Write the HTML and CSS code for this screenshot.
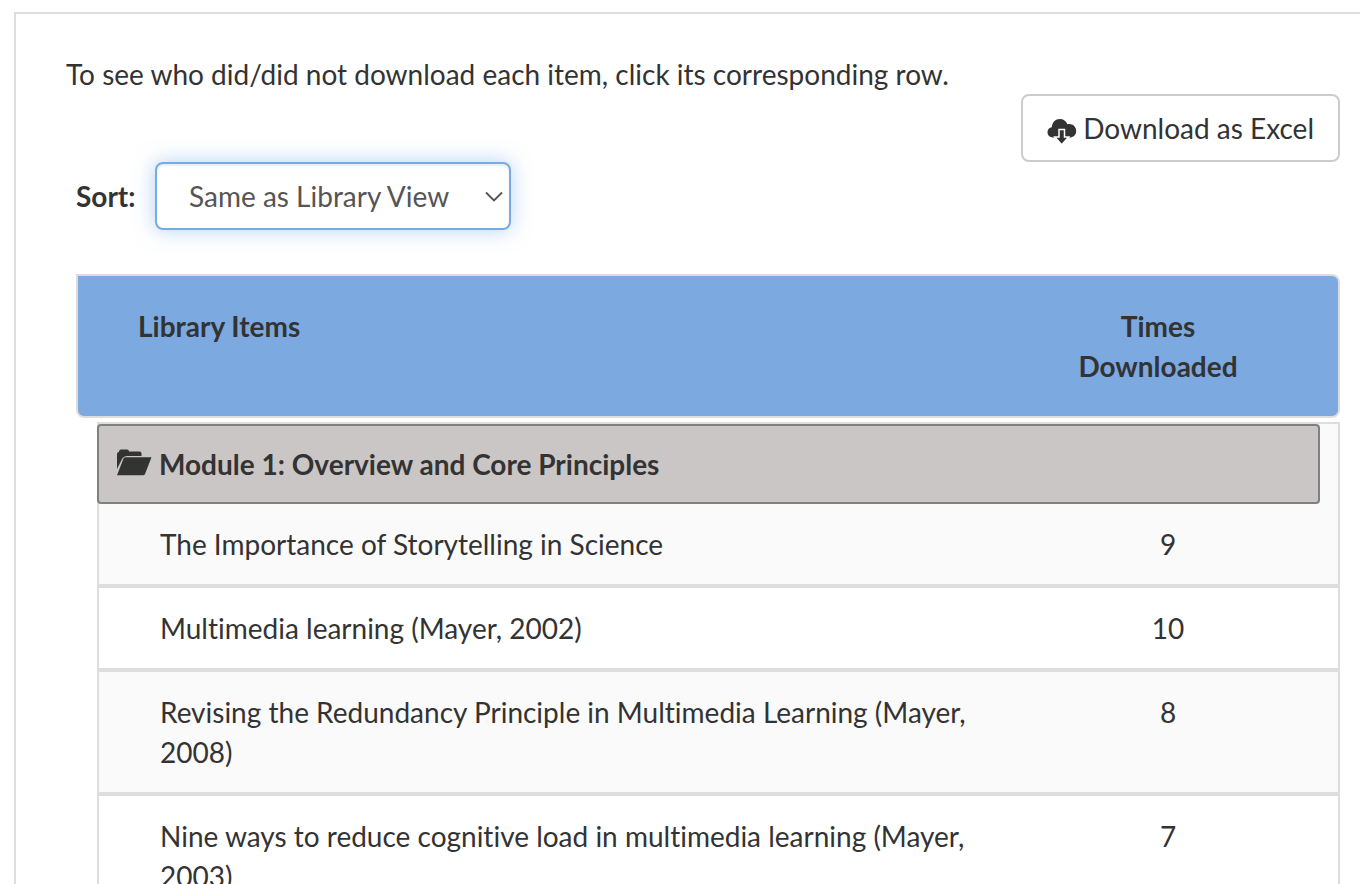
FILE: index.html
```html
<!DOCTYPE html>
<html lang="en">
<head>
<meta charset="utf-8">
<meta name="viewport" content="width=device-width, initial-scale=1">
<title>Library downloads</title>
<link rel="stylesheet" href="styles.css">
</head>
<body>
<main class="panel">
  <p class="intro">To see who did/did not download each item, click its corresponding row.</p>
  <div class="actions">
    <button class="download" type="button">
      <svg class="cloud" viewBox="0 0 30 27" aria-hidden="true">
        <path fill="currentColor" d="M6 19.500C2.800 19.500 .5 17.400 .5 14.300c0-2.700 1.900-4.700 4.300-5C5 4.300 8.500 1 12.900 1c3.600 0 6.300 2 7.400 5.300C25 5.100 29.200 8.200 29.200 13c0 3.900-2.900 6.500-6.700 6.500z"/>
        <path fill="currentColor" stroke="#fff" stroke-width="1.500" d="M12 11.500h5.500V19h4.200L14.700 26.800 7.800 19H12z"/>
      </svg>
      <span>Download as Excel</span>
    </button>
  </div>
  <div class="sort">
    <label class="sort-label" for="sort">Sort:</label>
    <div class="select-wrap">
      <select class="select" id="sort">
        <option>Same as Library View</option>
      </select>
      <svg class="chevron" viewBox="0 0 18 11" aria-hidden="true"><path d="M1 1.500l8 8 8-8" fill="none" stroke="currentColor" stroke-width="1.800"/></svg>
    </div>
  </div>
  <table class="library">
    <thead class="head">
      <tr class="head-row">
        <th class="head-name" scope="col">Library Items</th>
        <th class="head-count" scope="col">Times Downloaded</th>
      </tr>
    </thead>
    <tbody class="items">
      <tr class="module">
        <th class="module-name" colspan="2" scope="rowgroup">
          <svg class="folder" viewBox="0 0 36 27" aria-hidden="true">
            <path fill="currentColor" d="M1 20V5Q1 3 3 3V2.500Q3 .5 5 .5h6q2 0 2 2h10.500q2 0 2 2V7H11Q7.600 7 6.300 9.500z"/>
            <path fill="currentColor" d="M10 8.200h25.500L29 25q-.5 1.300-2 1.300H1L7.500 9.500q.6-1.300 2.500-1.300z"/>
          </svg>
          <span>Module 1: Overview and Core Principles</span>
        </th>
      </tr>
      <tr class="item"><td class="name">The Importance of Storytelling in Science</td><td class="count">9</td></tr>
      <tr class="item"><td class="name">Multimedia learning (Mayer, 2002)</td><td class="count">10</td></tr>
      <tr class="item"><td class="name">Revising the Redundancy Principle in Multimedia Learning (Mayer, 2008)</td><td class="count">8</td></tr>
      <tr class="item"><td class="name">Nine ways to reduce cognitive load in multimedia learning (Mayer, 2003)</td><td class="count">7</td></tr>
    </tbody>
  </table>
</main>
</body>
</html>
```

FILE: styles.css
```css
* { box-sizing: border-box; }
html { overflow-x: hidden; scrollbar-width: none; }
body {
  margin: 0;
  padding: 12px 0 0 14px;
  background: #fff;
  color: #333;
  font: 28px/40px Lato, "Open Sans", sans-serif;
  font-variant-ligatures: none;
}
.panel {
  border: 2px solid #ddd;
  border-width: 2px 0 0 2px;
  padding: 40px 20px 40px 50px;
}
.intro { margin: 0; }
.actions { display: flex; justify-content: flex-end; }
.download {
  display: flex;
  align-items: center;
  gap: 6px;
  height: 68px;
  padding: 0 24px;
  border: 2px solid #ccc;
  border-radius: 8px;
  background: #fff;
  color: inherit;
  font: inherit;
}
.cloud { width: 30px; height: 27px; margin-top: 6px; }
.sort {
  display: flex;
  align-items: center;
  gap: 20px;
  padding-left: 10px;
  margin-bottom: 44px;
}
.sort-label { width: 59px; font-weight: 700; white-space: nowrap; }
.select-wrap { position: relative; color: #555; }
.select {
  display: block;
  appearance: none;
  width: 356px;
  height: 68px;
  padding: 0 32px;
  border: 2px solid #76abe5;
  border-radius: 8px;
  background: #fff;
  box-shadow: inset 0 2px 2px rgba(0, 0, 0, .08), 0 0 20px rgba(102, 165, 233, .5);
  color: inherit;
  font: inherit;
}
.chevron {
  position: absolute;
  top: 29px;
  right: 8px;
  width: 18px;
  height: 11px;
  pointer-events: none;
}
.library { display: block; padding-left: 10px; text-align: left; }
.head {
  display: block;
  margin-bottom: 4px;
  border: 2px solid #ddd;
  border-radius: 0 8px 8px 8px;
  background: #7ba9e0;
}
.head-row, .item { display: flex; }
.head-name { flex: 1; padding: 30px 0 30px 60px; }
.head-count { width: 360px; padding: 30px 80px; text-align: center; }
.items {
  display: block;
  margin-left: 21px;
  border: 2px solid #ddd;
  background: linear-gradient(#fafafa 80px, #fff 80px);
}
.module {
  display: block;
  margin: 0 18px 0 -2px;
  border: 2px solid #808080;
  border-radius: 4px;
  background: #cac6c5;
}
.module-name { display: flex; align-items: center; gap: 7px; padding: 18px 17px; }
.folder { width: 36px; height: 27px; margin-bottom: 4px; }
.item { border-bottom: 4px solid #ddd; cursor: pointer; }
.item:nth-child(even) { background: #fafafa; }
.name { flex: 1; padding: 20px 20px 20px 61px; }
.count { width: 340px; padding: 20px; text-align: center; }
```
